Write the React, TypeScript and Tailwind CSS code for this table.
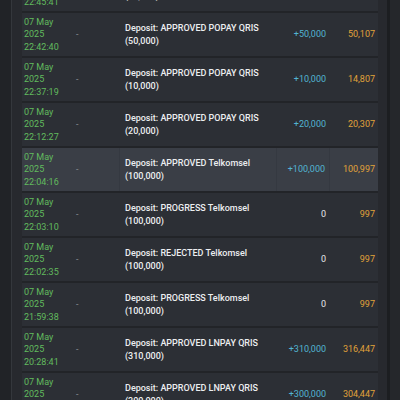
type Row = {
  time: string;
  desc: string;
  nominal: string;
  amount: string;
  balance: string;
  active?: boolean;
};

const rows: Row[] = [
  { time: "22:45:41", desc: "Deposit: APPROVED POPAY QRIS", nominal: "(50,000)", amount: "+50,000", balance: "57" },
  { time: "22:42:40", desc: "Deposit: APPROVED POPAY QRIS", nominal: "(50,000)", amount: "+50,000", balance: "50,107" },
  { time: "22:37:19", desc: "Deposit: APPROVED POPAY QRIS", nominal: "(10,000)", amount: "+10,000", balance: "14,807" },
  { time: "22:12:27", desc: "Deposit: APPROVED POPAY QRIS", nominal: "(20,000)", amount: "+20,000", balance: "20,307" },
  { time: "22:04:16", desc: "Deposit: APPROVED Telkomsel", nominal: "(100,000)", amount: "+100,000", balance: "100,997", active: true },
  { time: "22:03:10", desc: "Deposit: PROGRESS Telkomsel", nominal: "(100,000)", amount: "0", balance: "997" },
  { time: "22:02:35", desc: "Deposit: REJECTED Telkomsel", nominal: "(100,000)", amount: "0", balance: "997" },
  { time: "21:59:38", desc: "Deposit: PROGRESS Telkomsel", nominal: "(100,000)", amount: "0", balance: "997" },
  { time: "20:28:41", desc: "Deposit: APPROVED LNPAY QRIS", nominal: "(310,000)", amount: "+310,000", balance: "316,447" },
  { time: "20:11:05", desc: "Deposit: APPROVED LNPAY QRIS", nominal: "(300,000)", amount: "+300,000", balance: "304,447" },
];

function HistoryRow({ row }: { row: Row }) {
  const bg = row.active ? "bg-[#3a3e46]" : "bg-[#2c2f35]";
  const cell = row.active ? "border-r border-[#353941]" : "";
  return (
    <div className={`grid h-[43px] shrink-0 grid-cols-[40px_58px_157px_53px_48px] items-center ${bg}`}>
      <div className="flex h-full flex-col justify-center whitespace-nowrap pl-[2px] leading-[12.3px] text-[#62bb5e]">
        <span>07 May</span>
        <span>2025</span>
        <span>{row.time}</span>
      </div>
      <div className={`flex h-full items-center pl-[14px] text-[#8a8e95] ${cell}`}>-</div>
      <div
        className={`flex h-full flex-col justify-center whitespace-nowrap pl-[5px] font-medium leading-[13px] text-[#eceef0] ${cell}`}
      >
        <span>{row.desc}</span>
        <span>{row.nominal}</span>
      </div>
      <div
        className={`flex h-full items-center justify-end pr-[4px] ${cell} ${
          row.amount === "0" ? "text-[#e6e8ea]" : "text-[#52b4d2]"
        }`}
      >
        {row.amount}
      </div>
      <div className="flex h-full items-center justify-end pr-[3px] text-[#e0a23a]">{row.balance}</div>
    </div>
  );
}

export default function App() {
  return (
    <div className="flex h-[400px] w-[400px] overflow-hidden bg-[#202226] font-['Roboto',_sans-serif] text-[9px]">
      {/* left gutter */}
      <div className="w-[11px] shrink-0 bg-[#212327]" />
      <div className="w-[1px] shrink-0 bg-[#34373c]" />

      {/* panel */}
      <div className="flex w-[375px] shrink-0 bg-[#27292e] px-[10px]">
        <div className="mt-[-32px] flex w-[356px] flex-col gap-[2px] bg-[#222428]">
          {rows.map((r, i) => (
            <HistoryRow key={i} row={r} />
          ))}
        </div>
      </div>

      {/* scroll rail */}
      <div className="w-[3px] shrink-0 bg-[#1c1e21]" />
      <div className="flex-1 bg-[#25272b]" />
    </div>
  );
}
